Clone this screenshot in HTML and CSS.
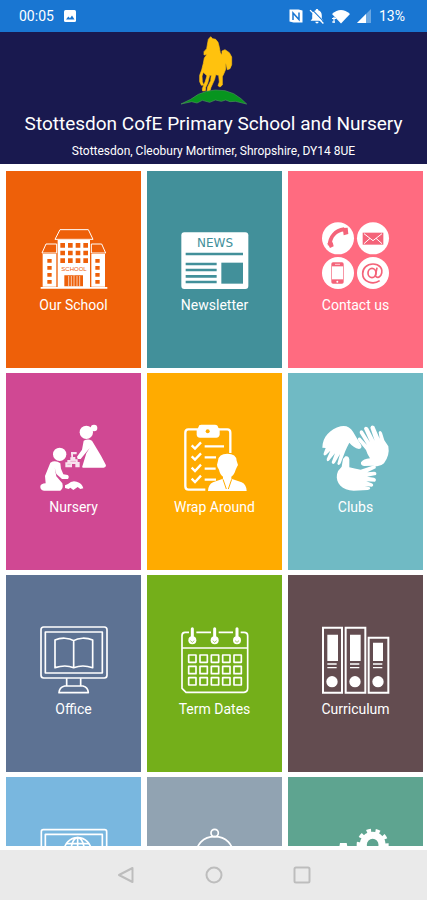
FILE: index.html
```html
<!DOCTYPE html>
<html lang="en">
<head>
<meta charset="utf-8">
<meta name="viewport" content="width=device-width, initial-scale=1">
<title>Stottesdon CofE Primary School and Nursery</title>
<link rel="stylesheet" href="styles.css">
</head>
<body>
<div class="status">
  <div class="status-group">
    <span>00:05</span>
    <svg class="status-icon" viewBox="0 0 14 14"><rect x="1" y="1" width="12" height="12" rx="1.5" fill="#fff"/><path d="M3 10.5 5.3 7.5 7 9.3 9 6.5 11.5 10.5z" fill="#1976d2"/></svg>
  </div>
  <div class="status-group status-right">
    <svg class="status-icon" viewBox="0 0 14 14"><path d="M.5.5h9l4 1v12h-9l-4-1z" fill="#fff"/><path d="M4 11V4l6 6.500V3.500" fill="none" stroke="#1976d2" stroke-width="1.500"/></svg>
    <svg class="status-icon status-bell" viewBox="0 0 15 15"><path d="M7.500 1c.8 0 1.200.5 1.200 1.200C11 3 12 4.700 12 7v3l1.500 2H1.500L3 10V7c0-2.300 1-4 3.300-4.800C6.300 1.500 6.700 1 7.500 1zM6 13h3c0 2-3 2-3 0z" fill="#fff"/><path d="M2.500 1 15 14" stroke="#1976d2" stroke-width="1"/><path d="M1 2 13.500 14.500" stroke="#fff" stroke-width="1.300"/></svg>
    <svg class="status-icon status-wifi" viewBox="0 0 20 15"><path d="M1 5Q10-3 19 5l-9 9.500z" fill="#fff"/><path d="M1 9.500h4M3 8v6M1 13h3" stroke="#fff" stroke-width="1.200"/></svg>
    <svg class="status-icon" viewBox="0 0 14 14"><path d="M14 0v14H0z" fill="#69a6e2"/><path d="M9 5v9H0z" fill="#fff"/></svg>
    <span class="battery">13%</span>
  </div>
</div>

<header class="school">
  <svg class="crest" viewBox="45 12 204 207" role="img" aria-label="School crest">
    <path d="M130 22 137 14 143 20 152 22 159 31 162 42 166 62 171 69 171 57 180 53 193 62 200 75 200 98 195 110 187 113 184 99 181 92 182 112 176 126 172 134 172 159 165 165 159 161 163 150 161 130 152 128 149 142 138 166 135 176 126 178 128 165 137 146 139 130 134 130 128 154 122 166 121 176 113 177 112 170 121 148 126 131 115 121 111 132 112 149 116 159 109 160 104 149 104 130 110 114 115 94 118 78 126 67 117 69 117 59 125 50z" fill="#ffc20e" stroke="#ffc20e" stroke-width="2" stroke-linejoin="round"/>
    <path d="M48 216 77 202 100 187 125 178 151 174 180 176 206 185 228 200 245 216 211 208 195 209 182 204 169 208 151 204 134 211 112 205 96 213 80 209z" fill="#07951f" stroke="#4b9659" stroke-width="2"/>
  </svg>
  <h1>Stottesdon CofE Primary School and Nursery</h1>
  <p>Stottesdon, Cleobury Mortimer, Shropshire, DY14 8UE</p>
</header>

<main class="tiles">
  <a class="tile orange" href="#school">
    <svg class="icon" viewBox="120 21 204 204">
      <g fill="none" stroke="#fff" stroke-width="3"><path d="M165 73 180 44H265L279 73zM126 114 138 87H170V114zM317 114 305 87H274V114z"/></g>
      <path d="M173 75h97v142h-97zM128 117h41v98h-41zM274 117h41v98h-41zM122 216h200v5H122z" fill="#fff"/>
      <path d="M181 84h14v14h-14zm23 0h14v14h-14zm23 0h14v14h-14zm23 0h14v14h-14zM181 107h14v14h-14zm23 0h14v14h-14zm23 0h14v14h-14zm23 0h14v14h-14zM181 130h14v14h-14zm23 0h14v14h-14zm23 0h14v14h-14zm23 0h14v14h-14zM142 132h13v11h-13zm0 21h13v11h-13zm0 21h13v11h-13zm0 21h13v11h-13zM286 132h13v11h-13zm0 21h13v11h-13zm0 21h13v11h-13zm0 21h13v11h-13zM193 181h56v33h-56z" fill="#ee6009"/>
      <path d="M206 183v31M214 183v31M222 181v34M231 183v31M239 183v31" stroke="#fff" stroke-width="2"/>
      <text class="school-sign" x="222" y="167" text-anchor="middle">SCHOOL</text>
    </svg>
    <span>Our School</span>
  </a>
  <a class="tile teal" href="#news">
    <svg class="icon" viewBox="117 21 204 204">
      <rect x="118" y="52" width="201" height="170" rx="9" fill="#fff"/>
      <text class="news-sign" x="219" y="95" text-anchor="middle">NEWS</text>
      <path d="M131 117H303M131 147h93M131 165h93M131 184h93M131 201h93" stroke="#42909a" stroke-width="8"/>
      <path d="M238 143h65v63h-65z" fill="#42909a"/>
    </svg>
    <span>Newsletter</span>
  </a>
  <a class="tile pink" href="#contact">
    <svg class="icon" viewBox="114 21 204 204">
      <g fill="#fff"><circle cx="162" cy="70" r="48"/><circle cx="267" cy="70" r="48"/><circle cx="162" cy="174" r="48"/><circle cx="267" cy="174" r="48"/></g>
      <path d="M137 91C138 66 153 47 181 43" fill="none" stroke="#f46379" stroke-width="12"/>
      <path d="M130 84 146 82 149 94 138 99zM176 39 191 38 193 57 179 61z" fill="#f46379"/>
      <path d="M236 53h62v36h-62z" fill="#f46379"/>
      <path d="m240 56 27 21 27-21M240 86l18-16M294 86l-18-16" fill="none" stroke="#fff" stroke-width="3"/>
      <rect x="142" y="142" width="37" height="64" rx="5" fill="#f46379"/><path d="M144 154h33v39h-33z" fill="#fff"/><path d="M153 148h15" stroke="#fff" stroke-width="2"/><circle cx="160" cy="200" r="3" fill="#fff"/>
      <g fill="none" stroke="#f46379" stroke-width="5"><ellipse cx="264" cy="174" rx="12" ry="14"/><path d="M279 158 274 183Q282 193 291 180C300 159 284 147 267 147C248 147 236 160 236 176C236 201 267 211 287 197"/></g>
    </svg>
    <span>Contact us</span>
  </a>
  <a class="tile magenta" href="#nursery">
    <svg class="icon" viewBox="120 27 204 204">
      <g fill="#fff"><circle cx="259" cy="52" r="20"/><circle cx="282" cy="39" r="10"/>
      <path d="M251 77Q264 70 276 77L303 122 318 151Q318 158 311 158H248Q245 157 248 151L259 115 269 99 242 132 233 132 231 125 246 104z"/>
      <circle cx="179" cy="118" r="20"/>
      <path d="M151 143Q166 134 181 145L183 161 190 178 203 180Q209 185 204 192L186 192 169 177 164 158 169 184 187 205Q191 221 181 227H132Q120 226 121 214Q122 206 137 205L135 183z"/>
      <path d="M195 211 204 207Q216 195 230 200Q246 204 250 220L241 222 233 216 220 225 211 218 206 222 195 219z"/>
      <path d="M213 116V111H230V118H219V126H226V133H233V141H239V157H226V147H216V157H196V142H202V135H211V127H214z" opacity=".85"/></g>
      <path d="M202 148h10M211 139h17" stroke="#d04893" stroke-width="1"/>
    </svg>
    <span>Nursery</span>
  </a>
  <a class="tile amber" href="#wrap">
    <svg class="icon" viewBox="117 27 204 204">
      <path d="M166 43H139Q130 43 130 53V214Q130 224 140 224H190M230 43H256Q265 43 265 53V114" fill="none" stroke="#fff" stroke-width="7"/>
      <path d="M170 36Q170 29 178 29H219Q228 29 228 37L233 42V59Q231 68 223 68H174Q165 68 164 59V43z" fill="#fff"/><circle cx="197" cy="49" r="6" fill="#ffab00"/>
      <path d="M149 91 159 101 177 82M149 124 159 134 177 115M149 158 159 168 177 149M149 191 159 201 177 182" fill="none" stroke="#fff" stroke-width="7"/>
      <path d="M188 94H246M188 127H222M188 161H221M188 194H222" stroke="#fff" stroke-width="7"/>
      <path d="M228 137Q230 116 256 116Q283 116 284 137L288 150Q284 157 281 164Q277 179 268 185V191L299 202Q313 208 314 228H198Q199 208 213 202L243 191V185Q234 179 231 164Q225 157 225 149z" fill="#fff"/>
      <path d="M243 193 253 222M269 193 259 222" stroke="#ffab00" stroke-width="3"/>
    </svg>
    <span>Wrap Around</span>
  </a>
  <a class="tile aqua" href="#clubs">
    <svg class="icon" viewBox="114 27 204 204">
      <g fill="#fff"><path d="M115 98C116 65 138 43 170 34Q194 29 207 50Q216 66 231 89Q236 99 225 102Q208 98 196 83Q190 94 184 108L170 145Q164 154 160 146L168 117 153 143Q146 151 143 142L153 115 136 136Q128 143 128 132L139 107 126 120Q117 124 119 115L125 99z"/>
      <path d="M313 94Q318 121 300 145Q287 158 268 152L240 153Q229 151 231 142Q238 132 258 130Q250 119 246 105L223 77Q219 66 229 68L249 90 227 54Q226 43 236 47L258 82 240 41Q242 31 252 38L272 77 259 38Q262 28 271 34L287 71 284 52Q289 44 294 53L301 76z"/>
      <path d="M184 124Q194 121 196 133V157Q211 161 230 164L266 152Q278 150 275 160L250 172 270 170Q280 171 276 180L249 185 270 188Q280 192 273 200L247 199 263 205Q272 210 264 215L242 213 257 217Q262 223 251 225L209 227C175 227 154 205 159 178Q161 166 173 155L177 132z"/></g>
    </svg>
    <span>Clubs</span>
  </a>
  <a class="tile slate" href="#office">
    <svg class="icon" viewBox="120 33 204 204">
      <g class="outline"><rect x="123" y="36" width="198" height="153" rx="8"/><path d="M136 51H307V174H136zM221 77C207 68 183 67 165 75V158Q196 148 221 158Q248 148 278 158V75C259 67 235 68 221 77zM221 77V158M200 190V213M242 190V213M194 213H249Q264 217 265 233H177Q178 217 194 213z"/></g>
    </svg>
    <span>Office</span>
  </a>
  <a class="tile green" href="#dates">
    <svg class="icon" viewBox="543 33 204 204">
      <g class="outline"><path d="M567 52H555Q546 52 546 62V220L558 232H732Q743 231 743 220V62Q743 52 732 52H722M589 52H633M656 52H699M546 99H743"/>
      <path d="M566 120h22v22h-22zm34 0h22v22h-22zm34 0h22v22h-22zm34 0h22v22h-22zm34 0h22v22h-22zM566 154h22v22h-22zm34 0h22v22h-22zm34 0h22v22h-22zm34 0h22v22h-22zm34 0h22v22h-22zM566 188h22v22h-22zm34 0h22v22h-22zm34 0h22v22h-22zm34 0h22v22h-22zm34 0h22v22h-22z"/></g>
      <path d="M577 41V76M644 41V76M711 41V76" stroke="#fff" stroke-width="9" stroke-linecap="round"/>
      <g fill="#fff"><circle cx="577" cy="76" r="12"/><circle cx="644" cy="76" r="12"/><circle cx="711" cy="76" r="12"/></g>
      <path d="m571 77 6 5 6-5m55 0 6 5 6-5m55 0 6 5 6-5" fill="none" stroke="#74af1a" stroke-width="2"/>
    </svg>
    <span>Term Dates</span>
  </a>
  <a class="tile brown" href="#curriculum">
    <svg class="icon" viewBox="327 33 204 204">
      <g class="outline binder"><path d="M330 38H387V233H330zM398 38H457V233H398zM467 68H526V233H467z"/></g>
      <path d="M343 59h32v79h-32zM411 59h32v79h-32zM480 83h30v55h-30z" fill="#fff"/>
      <path d="M343 147h28M343 158h28M411 147h28M411 158h28M480 147h28M480 158h28" stroke="#fff" stroke-width="4"/>
      <g fill="#fff"><circle cx="357" cy="200" r="17"/><circle cx="426" cy="200" r="17"/><circle cx="495" cy="200" r="17"/></g>
    </svg>
    <span>Curriculum</span>
  </a>
  <a class="tile sky" href="#web" aria-label="Website">
    <svg class="icon" viewBox="120 204 204 204">
      <g class="outline"><rect x="124" y="209" width="196" height="153" rx="6"/><path d="M136 223H307V348H136z"/><circle cx="233" cy="274" r="41"/><ellipse cx="233" cy="274" rx="20" ry="41"/><path d="M233 233V315M199 251H267M192 274H274"/></g>
    </svg>
  </a>
  <a class="tile grey" href="#alerts" aria-label="Notifications">
    <svg class="icon" viewBox="543 204 204 204">
      <g class="outline"><circle cx="644" cy="219" r="11"/><path d="M587 350V290C587 252 611 230 644 230C677 230 701 252 701 290V350z"/></g>
    </svg>
  </a>
  <a class="tile sea" href="#settings" aria-label="Settings">
    <svg class="icon" viewBox="966 204 204 204">
      <circle cx="1118" cy="254" r="28" fill="none" stroke="#fff" stroke-width="21"/>
      <circle cx="1118" cy="254" r="42" fill="none" stroke="#fff" stroke-width="12" stroke-dasharray="13 13.400" stroke-dashoffset="6"/>
      <circle cx="1030" cy="312" r="36" fill="none" stroke="#fff" stroke-width="24"/>
      <path d="M1020 249h20l4 21h-28z" fill="#fff"/>
    </svg>
  </a>
</main>

<nav class="system">
  <button aria-label="Back"><svg viewBox="0 0 18 18"><path d="M15.500 2v14L2 9z"/></svg></button>
  <button aria-label="Home"><svg viewBox="0 0 18 18"><circle cx="9" cy="9" r="7.500"/></svg></button>
  <button aria-label="Recent apps"><svg viewBox="0 0 18 18"><rect x="1.500" y="1.500" width="15" height="15" rx="1.500"/></svg></button>
</nav>
</body>
</html>
```
FILE: styles.css
```css
* { box-sizing: border-box; }

body {
  margin: 0;
  height: 100vh;
  display: flex;
  flex-direction: column;
  background: #fff;
  color: #fff;
  font-family: Roboto, "Liberation Sans", sans-serif;
}

.status {
  flex: none;
  height: 32px;
  padding: 0 22px 0 19px;
  display: flex;
  justify-content: space-between;
  align-items: center;
  background: #1976d2;
  font-size: 14px;
}

.status-group { display: flex; align-items: center; gap: 9px; }
.status-right { gap: 6px; }
.status-icon { width: 14px; height: 14px; }
.status-bell { width: 16px; height: 16px; }
.status-wifi { width: 20px; height: 15px; }
.battery { margin-left: 2px; }

.school {
  flex: none;
  padding: 4px 8px;
  display: flex;
  flex-direction: column;
  align-items: center;
  background: #19194f;
  text-align: center;
}

.crest { width: 68px; height: 69px; }

h1 {
  margin: 6px 0 0;
  font-size: 19px;
  line-height: 26px;
  font-weight: 400;
}

.school p {
  margin: 5px 0 0;
  font-size: 12px;
  line-height: 18px;
}

.tiles {
  flex: 1;
  min-height: 0;
  overflow: hidden;
  margin: 7px 4px 4px 6px;
  display: grid;
  grid-template-columns: repeat(3, 1fr);
  grid-auto-rows: 197px;
  gap: 5px 6px;
}

.tile {
  padding-top: 51px;
  display: flex;
  flex-direction: column;
  align-items: center;
  gap: 4px;
  color: #fff;
  font-size: 14px;
  line-height: 22px;
  text-decoration: none;
}

.icon { flex: none; width: 68px; height: 68px; }

.outline { fill: none; stroke: #fff; stroke-width: 5; stroke-linejoin: round; }
.binder { stroke-width: 6; stroke-linejoin: miter; }

.school-sign {
  fill: #ee6009;
  font: 18px "Liberation Sans", sans-serif;
}

.news-sign {
  fill: #42909a;
  font: 36px "DejaVu Sans", sans-serif;
}

.orange { background: #ee6009; }
.teal { background: #42909a; }
.pink { background: #ff6b80; }
.magenta { background: #d04893; }
.amber { background: #ffab00; }
.aqua { background: #70bac4; }
.slate { background: #5d7293; }
.green { background: #74af1a; }
.brown { background: #634c50; }
.sky { background: #79b7df; }
.grey { background: #91a3b2; }
.sea { background: #5ea490; }

.system {
  flex: none;
  height: 50px;
  display: flex;
  justify-content: center;
  align-items: center;
  gap: 48px;
  background: #eaeaea;
}

.system button {
  width: 40px;
  height: 40px;
  padding: 11px;
  border: 0;
  background: none;
}

.system svg {
  display: block;
  width: 18px;
  height: 18px;
  fill: none;
  stroke: #bdbdbd;
  stroke-width: 2;
  stroke-linejoin: round;
}
```
